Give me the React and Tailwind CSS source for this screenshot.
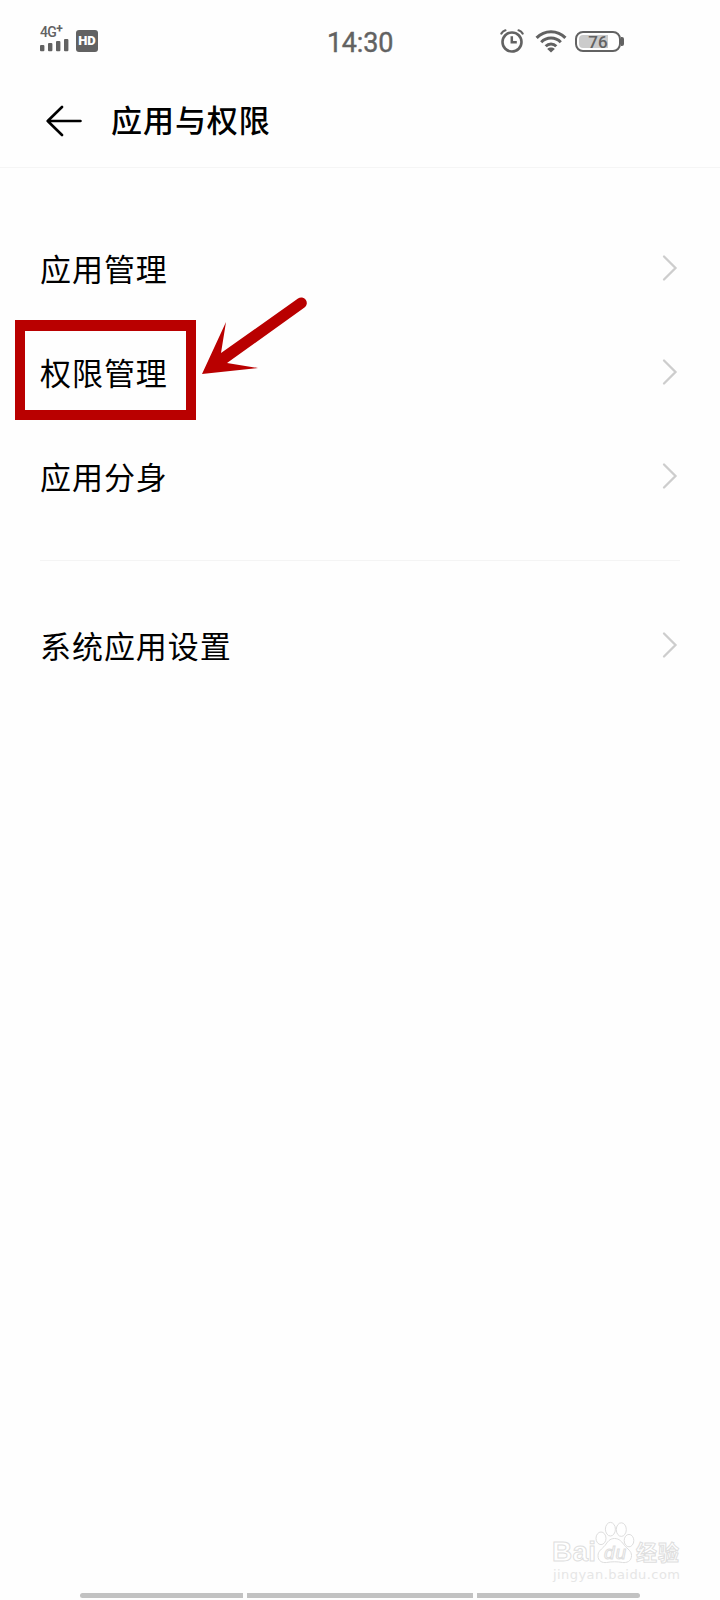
const groups = [
  ["应用管理", "权限管理", "应用分身"],
  ["系统应用设置"],
];

function SignalIcon() {
  return (
    <svg className="h-3.5 w-7.5" viewBox="0 0 30 14" fill="#626262">
      <rect x="0" y="7" width="4.4" height="6.3" rx="1" />
      <rect x="8" y="5" width="4.4" height="8.3" rx="1" />
      <rect x="16" y="3" width="4.4" height="10.3" rx="1" />
      <rect x="24" y="1" width="4.4" height="12.3" rx="1" />
    </svg>
  );
}

function AlarmIcon() {
  return (
    <svg className="h-6 w-6" viewBox="0 0 24 24" fill="none" stroke="#626262" strokeLinecap="round">
      <circle cx="12" cy="13" r="9.5" strokeWidth="2.6" />
      <path d="M11.8 7.3v5.9h5" strokeWidth="2.5" strokeLinecap="butt" />
      <path d="M1.4 4.6C2.2 3 3.7 1.8 5.4 1.3M22.6 4.6C21.8 3 20.3 1.8 18.6 1.3" strokeWidth="2.2" />
    </svg>
  );
}

function WifiIcon() {
  return (
    <svg className="h-6 w-8" viewBox="0 0 32 24" fill="none" stroke="#626262" strokeWidth="3">
      <path d="M1.6 8.9C9.5 0.6 22.5 0.6 30.4 8.9" />
      <path d="M6.2 13.2C11.6 7.7 20.4 7.7 25.8 13.2" />
      <path d="M10.7 17.3C13.7 14.3 18.3 14.3 21.3 17.3" />
      <path d="M12.2 20C14.4 18.1 17.6 18.1 19.8 20L16 23.4Z" fill="#626262" stroke="none" />
    </svg>
  );
}

function StatusBar() {
  return (
    <div className="relative flex h-[82px] items-start text-[#626262]">
      <div className="ml-10 mt-[27px] flex h-7 w-7.5 flex-col">
        <div className="flex h-[11px] items-center whitespace-nowrap font-[Roboto] text-[14px] font-medium leading-[11px] tracking-[-0.6px]">
          4G<span className="mb-1.5 text-[12px] font-bold">+</span>
        </div>
        <SignalIcon />
      </div>
      <div className="ml-[6px] mt-[30px] flex h-[22px] w-[22px] items-center justify-center rounded-[3px] bg-[#626262] font-[Roboto] text-[13px] font-black text-white">
        HD
      </div>
      <div className="absolute inset-x-0 top-[27px] text-center font-[Roboto] text-[27px] leading-8 tracking-[-0.2px] [-webkit-text-stroke:0.4px_#626262]">
        14:30
      </div>
      <div className="ml-auto mr-[96px] mt-[29px] flex h-6 items-center">
        <AlarmIcon />
        <div className="ml-[11px]"><WifiIcon /></div>
        <div className="ml-2 flex items-center">
          <div className="relative h-[21px] w-[46px] rounded-[8px] border-2 border-[#626262] p-[2px]">
            <div className="h-full w-[29px] rounded-l-[4px] bg-[#cbcbcb]" />
            <span className="absolute inset-0 text-center font-[Roboto] text-[17px] font-medium leading-[18px]">76</span>
          </div>
          <div className="h-[9px] w-[3px] rounded-r-[2px] bg-[#626262]" />
        </div>
      </div>
    </div>
  );
}

function Row({ label }) {
  return (
    <div className="flex h-26 items-center justify-between">
      <span className="pb-px text-[31px] leading-none tracking-[0.95px]">{label}</span>
      <svg className="mr-[2px] h-7 w-4" viewBox="0 0 16 28" fill="none" stroke="#cdcdcd" strokeWidth="2.3" strokeLinecap="round">
        <path d="M2 2.5L13.5 14L2 25.5" />
      </svg>
    </div>
  );
}

function Watermark() {
  return (
    <div className="absolute left-[552px] top-[1520px] h-[65px] w-[132px]">
      <svg width="132" height="65" viewBox="0 0 132 65" fill="#fff" stroke="#dedede" strokeWidth="1">
        <text x="0" y="41" fontSize="28" fontWeight="700" fontFamily="Liberation Sans" textLength="44">Bai</text>
        <ellipse cx="49" cy="18.3" rx="5" ry="6.3" />
        <ellipse cx="58.4" cy="9.2" rx="5" ry="6.8" />
        <ellipse cx="69.3" cy="9.6" rx="5" ry="6.8" />
        <ellipse cx="77" cy="20.6" rx="4.8" ry="6.2" />
        <path d="M62.500 18.500c5 0 7.500 3.500 10 7 3 3.500 7 5.500 7 10 0 6-5 7.500-9 7-5-1-11-1-16 0-4 .5-8.500-1-8.500-7 0-4.500 4-6.500 7-10 2.500-3.500 4.500-7 9.500-7z" />
        <text x="52" y="39" fontSize="19" fontFamily="Liberation Sans" fontStyle="italic" textLength="22">du</text>
        <text x="84" y="40" fontSize="21" fontWeight="700" fontFamily="Noto Sans CJK SC" textLength="43">经验</text>
        <text x="1" y="59" fontSize="13" fontFamily="DejaVu Sans" fill="#e6e6e6" stroke="none" textLength="127">jingyan.baidu.com</text>
      </svg>
    </div>
  );
}

export default function App() {
  return (
    <div className="relative flex h-[1600px] w-[720px] flex-col overflow-hidden bg-[#fefefe] font-['Noto_Sans_CJK_SC',sans-serif] text-black">
      <StatusBar />
      <header className="flex h-[86px] items-center border-b border-[#f5f5f5] pl-[46px] pb-[8px]">
        <svg className="h-8 w-9" viewBox="0 0 36 32" fill="none" stroke="#000" strokeWidth="2.6" strokeLinecap="round" strokeLinejoin="round">
          <path d="M16 2L1.7 16L16 30M2 16H34.5" />
        </svg>
        <h1 className="ml-[29px] pb-[5px] text-[31px] font-medium leading-none tracking-[0.95px]">应用与权限</h1>
      </header>
      <main className="px-10 pt-12">
        {groups.map((items, i) => (
          <section key={i} className={i > 0 ? "mt-8 border-t border-[#f4f4f4] pt-8" : ""}>
            {items.map((label) => (
              <Row key={label} label={label} />
            ))}
          </section>
        ))}
      </main>
      <footer className="mt-auto mb-[2px] flex h-[5px] gap-[4px] px-20">
        <div className="w-[163px] rounded-l-full bg-[#c2c2c2]" />
        <div className="flex-1 bg-[#c2c2c2]" />
        <div className="w-[163px] rounded-r-full bg-[#c2c2c2]" />
      </footer>

      {/* highlight around the second row */}
      <div className="absolute left-[15px] top-[320px] h-[100px] w-[181px] border-x-[10px] border-t-[11px] border-b-[10px] border-[#b90000]" />
      <svg className="absolute left-[200px] top-[295px]" width="110" height="82" viewBox="0 0 110 82" fill="#b90000">
        <path d="M2 79L26 27L21 58L98 3.5A5.5 5.5 0 0 1 104.5 12.5L27 68L58 73Z" />
      </svg>
      <Watermark />
    </div>
  );
}
